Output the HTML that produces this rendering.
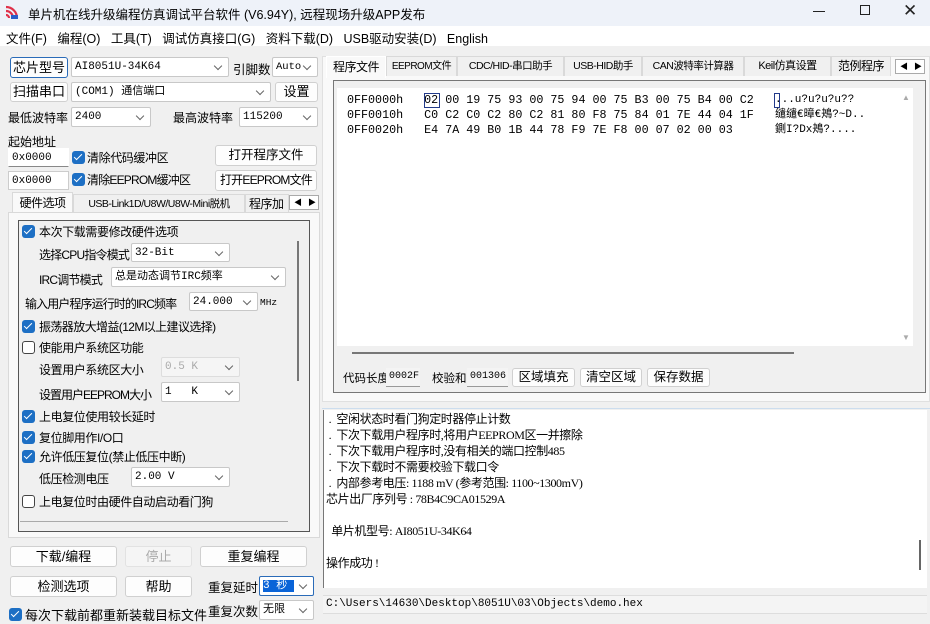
<!DOCTYPE html>
<html><head><meta charset="utf-8"><style>
*{box-sizing:border-box;margin:0;padding:0}
body{width:930px;height:618px;overflow:hidden;background:#f0f0f0;position:relative;font-family:"Liberation Sans","Noto Sans CJK SC",sans-serif;font-size:12px;color:#000}
.a{position:absolute;white-space:nowrap}
.l{position:absolute;white-space:nowrap;font-size:12px;letter-spacing:-0.4px}
.btn{position:absolute;background:#fdfdfd;border:1px solid #d0d0d0;border-radius:3px;text-align:center;font-size:12px}
.cb,.in{position:absolute;background:#fff;border:1px solid #c8c8c8;border-radius:2px;font-family:"Liberation Mono","Noto Sans CJK SC",monospace;font-size:11px;padding-left:3px;line-height:18px;overflow:hidden}
.cb:after{content:"";position:absolute;right:7px;top:5px;width:5px;height:5px;border-right:1px solid #666;border-bottom:1px solid #666;transform:rotate(45deg)}
.chk{position:absolute;width:13px;height:13px;border-radius:3px;background:#1d6fc4}
.chk:after{content:"";position:absolute;left:4px;top:1px;width:3px;height:7px;border-right:1.5px solid #fff;border-bottom:1.5px solid #fff;transform:rotate(45deg)}
.unc{position:absolute;width:13px;height:13px;border-radius:3px;border:1px solid #444;background:#fff}
.m{font-family:"Liberation Mono","Noto Sans CJK SC",monospace}
.tab{position:absolute;top:0;height:20px;border:1px solid #d9d9d9;border-bottom:none;background:#f0f0f0;font-size:11px;line-height:19px;text-align:center;overflow:hidden;letter-spacing:-0.5px}
</style></head><body>
<div class="a" style="left:0;top:0;width:930px;height:26px;background:#eef2f9"></div>
<svg class="a" style="left:4px;top:4px" width="16" height="16" viewBox="0 0 16 16"><path d="M2 3a11 11 0 0 1 11 11M2 7a7 7 0 0 1 7 7M2 11a3 3 0 0 1 3 3" stroke="#e0314a" stroke-width="2.2" fill="none"/><rect x="7" y="11" width="7" height="4" fill="#2a5cc8"/></svg>
<div class="a" style="left:28px;top:4px;font-size:12.5px">单片机在线升级编程仿真调试平台软件 (V6.94Y), 远程现场升级APP发布</div>
<div class="a" style="left:813px;top:11px;width:12px;height:1px;background:#222"></div>
<div class="a" style="left:860px;top:5px;width:10px;height:10px;border:1px solid #222"></div>
<div class="a" style="left:903px;top:1px;font-size:17px;color:#222">✕</div>
<div class="a" style="left:0;top:26px;width:930px;height:20px;background:#fff"></div>
<div class="a" style="left:6px;top:28px;font-size:12.5px">文件(F)&nbsp;&nbsp;&nbsp;编程(O)&nbsp;&nbsp;&nbsp;工具(T)&nbsp;&nbsp;&nbsp;调试仿真接口(G)&nbsp;&nbsp;&nbsp;资料下载(D)&nbsp;&nbsp;&nbsp;USB驱动安装(D)&nbsp;&nbsp;&nbsp;English</div>

<div class="btn" style="left:10px;top:57px;width:58px;height:21px;border-color:#2a6bb8;line-height:19px;font-size:13px">芯片型号</div>
<div class="cb" style="left:71px;top:57px;width:158px;height:20px">AI8051U-34K64</div>
<div class="a" style="left:233px;top:59px;font-size:12.5px">引脚数</div>
<div class="cb" style="left:272px;top:57px;width:46px;height:20px;font-size:10.5px">Auto</div>
<div class="btn" style="left:10px;top:82px;width:58px;height:20px;line-height:18px;font-size:13px">扫描串口</div>
<div class="cb" style="left:71px;top:82px;width:200px;height:20px">(COM1) 通信端口</div>
<div class="btn" style="left:275px;top:82px;width:43px;height:20px;line-height:18px;font-size:13px">设置</div>
<div class="a" style="left:8px;top:109px;font-size:12px">最低波特率</div>
<div class="cb" style="left:71px;top:107px;width:80px;height:20px">2400</div>
<div class="a" style="left:173px;top:109px;font-size:12px">最高波特率</div>
<div class="cb" style="left:239px;top:107px;width:79px;height:20px">115200</div>
<div class="a" style="left:8px;top:133px;font-size:12px">起始地址</div>
<div class="in" style="left:8px;top:148px;width:61px;height:19px;border-color:#fff;border-bottom-color:#888;border-radius:0">0x0000</div>
<div class="chk" style="left:72px;top:151px"></div><div class="l" style="left:87px;top:149px">清除代码缓冲区</div>
<div class="btn" style="left:215px;top:145px;width:102px;height:21px;line-height:19px;font-size:12.5px">打开程序文件</div>
<div class="in" style="left:8px;top:171px;width:61px;height:19px;border-color:#ccc;border-radius:0">0x0000</div>
<div class="chk" style="left:72px;top:173px"></div><div class="l" style="left:87px;top:171px;letter-spacing:-0.8px">清除EEPROM缓冲区</div>
<div class="btn" style="left:215px;top:170px;width:102px;height:21px;line-height:19px;font-size:12px;letter-spacing:-0.8px">打开EEPROM文件</div>

<div class="a" style="left:8px;top:194px;width:312px;height:20px">
<div class="tab" style="left:4px;width:61px;background:#f9f9f9;height:22px;top:-2px;line-height:21px;font-size:12px">硬件选项</div>
<div class="tab" style="left:65px;width:172px;font-size:10.5px">USB-Link1D/U8W/U8W-Mini脱机</div>
<div class="tab" style="left:237px;width:44px;text-align:left;padding-left:3px;font-size:12px">程序加</div>
<div class="a" style="left:281px;top:1px;width:30px;height:15px;border:1px solid #aaa;background:#fff;font-size:8px;line-height:13px;letter-spacing:6px;padding-left:4px">◀▶</div>
</div>
<div class="a" style="left:8px;top:212px;width:312px;height:326px;border:1px solid #d9d9d9;background:#f9f9f9"></div>
<div class="a" style="left:18px;top:220px;width:292px;height:312px;border:1px solid #555;background:#f0f0f0"></div>
<div class="a" style="left:297px;top:241px;width:2px;height:140px;background:#777"></div>
<div class="a" style="left:20px;top:521px;width:268px;height:1px;background:#aaa"></div>
<div class="chk" style="left:22px;top:225px"></div><div class="l" style="left:39px;top:223px">本次下载需要修改硬件选项</div>
<div class="l" style="left:39px;top:246px;letter-spacing:-0.8px">选择CPU指令模式</div><div class="cb" style="left:131px;top:243px;width:99px;height:19px">32-Bit</div>
<div class="l" style="left:39px;top:271px;letter-spacing:-0.8px">IRC调节模式</div><div class="cb" style="left:111px;top:267px;width:175px;height:20px">总是动态调节IRC频率</div>
<div class="l" style="left:25px;top:295px;letter-spacing:-0.9px">输入用户程序运行时的IRC频率</div><div class="cb" style="left:189px;top:292px;width:69px;height:19px">24.000</div><div class="a m" style="left:260px;top:297px;font-size:9.5px">MHz</div>
<div class="chk" style="left:22px;top:320px"></div><div class="l" style="left:39px;top:318px;letter-spacing:-0.6px">振荡器放大增益(12M以上建议选择)</div>
<div class="unc" style="left:22px;top:341px"></div><div class="l" style="left:39px;top:339px">使能用户系统区功能</div>
<div class="l" style="left:39px;top:361px">设置用户系统区大小</div><div class="cb" style="left:161px;top:357px;width:79px;height:20px;color:#aaa;background:#f5f5f5;border-color:#ddd">0.5 K</div>
<div class="l" style="left:39px;top:386px;letter-spacing:-1px">设置用户EEPROM大小</div><div class="cb" style="left:161px;top:382px;width:79px;height:20px">1&nbsp;&nbsp;&nbsp;K</div>
<div class="chk" style="left:22px;top:410px"></div><div class="l" style="left:39px;top:408px">上电复位使用较长延时</div>
<div class="chk" style="left:22px;top:431px"></div><div class="l" style="left:39px;top:429px">复位脚用作I/O口</div>
<div class="chk" style="left:22px;top:450px"></div><div class="l" style="left:39px;top:448px">允许低压复位(禁止低压中断)</div>
<div class="l" style="left:39px;top:470px">低压检测电压</div><div class="cb" style="left:131px;top:467px;width:99px;height:20px">2.00 V</div>
<div class="unc" style="left:22px;top:495px"></div><div class="l" style="left:39px;top:493px">上电复位时由硬件自动启动看门狗</div>

<div class="btn" style="left:10px;top:546px;width:107px;height:21px;line-height:19px;font-size:13px">下载/编程</div>
<div class="btn" style="left:125px;top:546px;width:67px;height:21px;line-height:19px;color:#aaa;background:#f5f5f5;border-color:#e2e2e2;font-size:13px">停止</div>
<div class="btn" style="left:200px;top:546px;width:107px;height:21px;line-height:19px;font-size:13px">重复编程</div>
<div class="btn" style="left:10px;top:576px;width:107px;height:21px;line-height:19px;font-size:13px">检测选项</div>
<div class="btn" style="left:125px;top:576px;width:67px;height:21px;line-height:19px;font-size:13px">帮助</div>
<div class="a" style="left:208px;top:577px;font-size:12.5px">重复延时</div>
<div class="cb" style="left:259px;top:576px;width:55px;height:20px;border-color:#2a6bb8"><span style="background:#0a64d8;color:#fff">3 秒&nbsp;</span></div>
<div class="chk" style="left:9px;top:608px"></div><div class="a" style="left:25px;top:605px;font-size:13px">每次下载前都重新装载目标文件</div>
<div class="a" style="left:208px;top:601px;font-size:12.5px">重复次数</div>
<div class="cb" style="left:259px;top:600px;width:55px;height:20px">无限</div>

<div class="a" style="left:322px;top:56px;width:608px;height:346px;background:#f9f9f9;border:1px solid #e0e0e0"></div>
<div class="a" style="left:322px;top:56px;width:608px;height:22px">
<div class="tab" style="left:4px;width:60px;background:#f9f9f9;height:22px;border-color:#fff;font-size:12px;line-height:21px">程序文件</div>
<div class="tab" style="left:64px;width:71px;font-size:10px">EEPROM文件</div>
<div class="tab" style="left:135px;width:107px;font-size:10.5px">CDC/HID-串口助手</div>
<div class="tab" style="left:242px;width:78px;font-size:10.5px">USB-HID助手</div>
<div class="tab" style="left:320px;width:102px;font-size:10.5px">CAN波特率计算器</div>
<div class="tab" style="left:422px;width:87px;font-size:11px">Keil仿真设置</div>
<div class="tab" style="left:509px;width:60px;font-size:12px">范例程序</div>
<div class="a" style="left:573px;top:3px;width:30px;height:15px;border:1px solid #aaa;background:#fff;font-size:8px;line-height:13px;letter-spacing:6px;padding-left:4px">◀▶</div>
</div>
<div class="a" style="left:333px;top:80px;width:593px;height:313px;border:1px solid #777;background:#f0f0f0"></div>
<div class="a" style="left:337px;top:88px;width:576px;height:258px;background:#fff"></div>
<div class="a" style="left:902px;top:93px;font-size:8px;color:#aaa">▲</div>
<div class="a" style="left:902px;top:333px;font-size:8px;color:#aaa">▼</div>
<div class="a" style="left:352px;top:352px;width:442px;height:2px;background:#777"></div>
<div class="a m" style="left:347px;top:93px;font-size:11.7px;line-height:15px">0FF0000h&nbsp;&nbsp;&nbsp;02 00 19 75 93 00 75 94 00 75 B3 00 75 B4 00 C2<br>0FF0010h&nbsp;&nbsp;&nbsp;C0 C2 C0 C2 80 C2 81 80 F8 75 84 01 7E 44 04 1F<br>0FF0020h&nbsp;&nbsp;&nbsp;E4 7A 49 B0 1B 44 78 F9 7E F8 00 07 02 00 03</div>
<div class="a" style="left:424px;top:93px;width:16px;height:15px;border:1px solid #223a8a"></div>
<div class="a" style="left:774px;top:93px;width:6px;height:15px;border:1px solid #223a8a"></div>
<div class="a m" style="left:775px;top:93px;font-size:11px;line-height:15px">...u?u?u?u??<br>缱缱€暲€鴂?~D..<br>鍘I?Dx鴂?....</div>
<div class="a" style="left:343px;top:370px;font-size:11.5px">代码长度</div>
<div class="a m" style="left:386px;top:368px;width:34px;height:19px;border-bottom:1px solid #999;font-size:10px;padding:3px 0 0 3px;background:#f4f4f4">0002F</div>
<div class="a" style="left:432px;top:370px;font-size:11.5px">校验和</div>
<div class="a m" style="left:467px;top:368px;width:41px;height:19px;border-bottom:1px solid #999;font-size:10px;padding:3px 0 0 3px;background:#f4f4f4">001306</div>
<div class="btn" style="left:512px;top:368px;width:63px;height:19px;line-height:17px;font-size:12.5px">区域填充</div>
<div class="btn" style="left:580px;top:368px;width:62px;height:19px;line-height:17px;font-size:12.5px">清空区域</div>
<div class="btn" style="left:647px;top:368px;width:63px;height:19px;line-height:17px;font-size:12.5px">保存数据</div>

<div class="a" style="left:322px;top:408px;width:608px;height:1px;background:#cde"></div>
<div class="a" style="left:323px;top:410px;width:604px;height:178px;background:#fff;border-left:1px solid #777"></div>
<div class="a" style="left:919px;top:540px;width:2px;height:30px;background:#666"></div>
<div class="a" style="left:326px;top:411px;font-size:12px;line-height:16px;font-family:'Liberation Serif','Noto Sans CJK SC',serif;letter-spacing:-0.4px">
&nbsp;. &nbsp;空闲状态时看门狗定时器停止计数<br>
&nbsp;. &nbsp;下次下载用户程序时,将用户EEPROM区一并擦除<br>
&nbsp;. &nbsp;下次下载用户程序时,没有相关的端口控制485<br>
&nbsp;. &nbsp;下次下载时不需要校验下载口令<br>
&nbsp;. &nbsp;内部参考电压: 1188 mV (参考范围: 1100~1300mV)<br>
芯片出厂序列号 : 78B4C9CA01529A<br><br>
&nbsp;&nbsp;单片机型号: AI8051U-34K64<br><br>
操作成功 !</div>
<div class="a" style="left:323px;top:595px;width:604px;height:19px;background:#f4f4f4;border-top:1px solid #ddd;border-bottom:1px solid #ddd"></div>
<div class="a m" style="left:326px;top:598px;font-size:11px">C:\Users\14630\Desktop\8051U\03\Objects\demo.hex</div>
</body></html>
